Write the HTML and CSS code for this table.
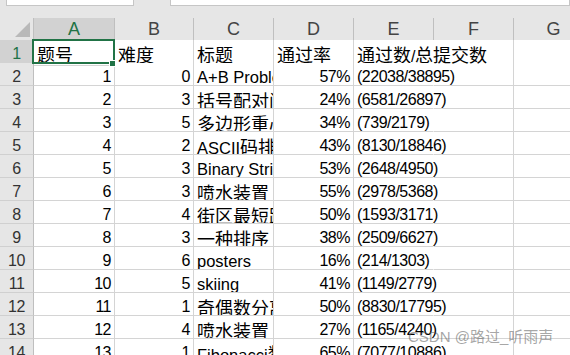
FILE: index.html
```html
<!DOCTYPE html>
<html lang="zh-CN">
<head>
<meta charset="utf-8">
<title>工作表</title>
<link rel="stylesheet" href="styles.css">
</head>
<body>
<div class="page">
  <div class="toolbar">
    <div class="namebox"></div>
    <div class="formula"></div>
  </div>
  <div class="sheet">
    <div class="row head">
      <div class="corner"><svg width="34" height="22" viewBox="0 0 34 22"><polygon points="30,19 30,4 15,19" fill="#b9b9b9"/></svg></div>
      <div class="ch sel">A</div>
      <div class="ch">B</div>
      <div class="ch">C</div>
      <div class="ch">D</div>
      <div class="ch">E</div>
      <div class="ch">F</div>
      <div class="ch">G</div>
    </div>
    <div class="row">
      <div class="rh sel">1</div>
      <div class="c active"><span class="zh">题号</span><span class="selbox"><span class="handle"></span></span></div>
      <div class="c"><span class="zh">难度</span></div>
      <div class="c txt"><span class="zh">标题</span></div>
      <div class="c"><span class="zh">通过率</span></div>
      <div class="c over"><span class="zh">通过数</span>/<span class="zh">总提交数</span></div>
      <div class="c"></div>
      <div class="c"></div>
    </div>
    <div class="row">
      <div class="rh">2</div>
      <div class="c num">1</div>
      <div class="c num">0</div>
      <div class="c txt">A+B Problem</div>
      <div class="c num">57%</div>
      <div class="c over">(22038/38895)</div>
      <div class="c"></div>
      <div class="c"></div>
    </div>
    <div class="row">
      <div class="rh">3</div>
      <div class="c num">2</div>
      <div class="c num">3</div>
      <div class="c txt"><span class="zh">括号配对问题</span></div>
      <div class="c num">24%</div>
      <div class="c over">(6581/26897)</div>
      <div class="c"></div>
      <div class="c"></div>
    </div>
    <div class="row">
      <div class="rh">4</div>
      <div class="c num">3</div>
      <div class="c num">5</div>
      <div class="c txt"><span class="zh">多边形重心问题</span></div>
      <div class="c num">34%</div>
      <div class="c over">(739/2179)</div>
      <div class="c"></div>
      <div class="c"></div>
    </div>
    <div class="row">
      <div class="rh">5</div>
      <div class="c num">4</div>
      <div class="c num">2</div>
      <div class="c txt">ASCII<span class="zh">码排序</span></div>
      <div class="c num">43%</div>
      <div class="c over">(8130/18846)</div>
      <div class="c"></div>
      <div class="c"></div>
    </div>
    <div class="row">
      <div class="rh">6</div>
      <div class="c num">5</div>
      <div class="c num">3</div>
      <div class="c txt">Binary String Matching</div>
      <div class="c num">53%</div>
      <div class="c over">(2648/4950)</div>
      <div class="c"></div>
      <div class="c"></div>
    </div>
    <div class="row">
      <div class="rh">7</div>
      <div class="c num">6</div>
      <div class="c num">3</div>
      <div class="c txt"><span class="zh">喷水装置（一）</span></div>
      <div class="c num">55%</div>
      <div class="c over">(2978/5368)</div>
      <div class="c"></div>
      <div class="c"></div>
    </div>
    <div class="row">
      <div class="rh">8</div>
      <div class="c num">7</div>
      <div class="c num">4</div>
      <div class="c txt"><span class="zh">街区最短路径问题</span></div>
      <div class="c num">50%</div>
      <div class="c over">(1593/3171)</div>
      <div class="c"></div>
      <div class="c"></div>
    </div>
    <div class="row">
      <div class="rh">9</div>
      <div class="c num">8</div>
      <div class="c num">3</div>
      <div class="c txt"><span class="zh">一种排序</span></div>
      <div class="c num">38%</div>
      <div class="c over">(2509/6627)</div>
      <div class="c"></div>
      <div class="c"></div>
    </div>
    <div class="row">
      <div class="rh">10</div>
      <div class="c num">9</div>
      <div class="c num">6</div>
      <div class="c txt">posters</div>
      <div class="c num">16%</div>
      <div class="c over">(214/1303)</div>
      <div class="c"></div>
      <div class="c"></div>
    </div>
    <div class="row">
      <div class="rh">11</div>
      <div class="c num">10</div>
      <div class="c num">5</div>
      <div class="c txt">skiing</div>
      <div class="c num">41%</div>
      <div class="c over">(1149/2779)</div>
      <div class="c"></div>
      <div class="c"></div>
    </div>
    <div class="row">
      <div class="rh">12</div>
      <div class="c num">11</div>
      <div class="c num">1</div>
      <div class="c txt"><span class="zh">奇偶数分离</span></div>
      <div class="c num">50%</div>
      <div class="c over">(8830/17795)</div>
      <div class="c"></div>
      <div class="c"></div>
    </div>
    <div class="row">
      <div class="rh">13</div>
      <div class="c num">12</div>
      <div class="c num">4</div>
      <div class="c txt"><span class="zh">喷水装置（二）</span></div>
      <div class="c num">27%</div>
      <div class="c over">(1165/4240)</div>
      <div class="c"></div>
      <div class="c"></div>
    </div>
    <div class="row">
      <div class="rh">14</div>
      <div class="c num">13</div>
      <div class="c num">1</div>
      <div class="c txt">Fibonacci<span class="zh">数</span></div>
      <div class="c num">65%</div>
      <div class="c over">(7077/10886)</div>
      <div class="c"></div>
      <div class="c"></div>
    </div>
  </div>
  <div class="wm">CSDN @<span class="wmzh">路过</span>_<span class="wmzh">听雨声</span></div>
</div>
</body>
</html>
```
FILE: styles.css
```css
html, body {
  margin: 0;
  padding: 0;
  background: #ffffff;
}

.page {
  position: relative;
  width: 570px;
  height: 355px;
  overflow: hidden;
  background: #e6e6e6;
  font-family: "Liberation Sans", Arial, sans-serif;
}

.toolbar {
  display: flex;
  align-items: flex-start;
  height: 18px;
}

.namebox,
.formula {
  box-sizing: border-box;
  height: 6px;
  background: #ffffff;
  border: 1px solid #c6c6c6;
  border-top: 0;
}

.namebox {
  margin-left: 6px;
  width: 128px;
}

.formula {
  margin-left: 36px;
  flex: 1;
}

.row {
  display: grid;
  grid-template-columns: 34px 81px 79px 80px 80px 80px 80px 80px;
  height: 23px;
}

.row.head {
  height: 22px;
}

.corner {
  box-sizing: border-box;
  background: #e6e6e6;
  border-right: 1px solid #bfbfbf;
  border-bottom: 1px solid #bfbfbf;
}

.corner svg {
  display: block;
}

.ch {
  box-sizing: border-box;
  background: #e6e6e6;
  border-right: 1px solid #bfbfbf;
  border-bottom: 1px solid #bfbfbf;
  text-align: center;
  font-size: 18px;
  line-height: 20px;
  padding-top: 1px;
  color: #444444;
}

.rh {
  box-sizing: border-box;
  background: #e6e6e6;
  border-right: 1px solid #bfbfbf;
  border-bottom: 1px solid #d0d0d0;
  text-align: center;
  font-size: 16px;
  letter-spacing: -0.5px;
  line-height: 16px;
  padding-top: 6px;
  color: #333333;
}

.ch.sel,
.rh.sel {
  background: #d2d2d2;
  color: #217346;
}

.c {
  box-sizing: border-box;
  background: #ffffff;
  border-right: 1px solid #d4d4d4;
  border-bottom: 1px solid #d4d4d4;
  padding: 6px 3px 0;
  font-size: 16px;
  letter-spacing: -0.5px;
  line-height: 16px;
  white-space: nowrap;
  overflow: hidden;
  color: #000000;
}

.c.txt {
  font-size: 16.5px;
  letter-spacing: 0;
}

.c.num {
  text-align: right;
}

.c.over {
  position: relative;
  z-index: 1;
  overflow: visible;
  border-right-color: #ffffff;
}

.c.active {
  position: relative;
  z-index: 2;
  overflow: visible;
}

.zh {
  font-family: "Noto Sans CJK SC", sans-serif;
  font-size: 18px;
  letter-spacing: 0;
}

.selbox {
  position: absolute;
  left: -2px;
  top: -1px;
  width: 83px;
  height: 25px;
  box-sizing: border-box;
  border: 2px solid #217346;
}

.handle {
  position: absolute;
  left: 75px;
  top: 19px;
  width: 7px;
  height: 7px;
  box-sizing: border-box;
  background: #217346;
  border: 1px solid #ffffff;
}

.wm {
  position: absolute;
  z-index: 5;
  left: 408px;
  top: 327px;
  font-size: 15px;
  line-height: 18px;
  white-space: nowrap;
  color: rgba(90, 90, 90, 0.55);
}

.wmzh {
  font-family: "Noto Sans CJK SC", sans-serif;
}
```
